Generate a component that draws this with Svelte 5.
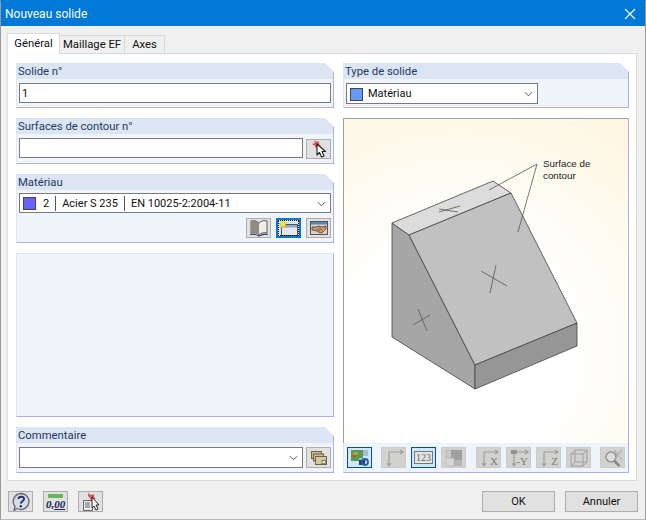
<script>
    const toolbar = [
        { icon: 'render', on: true },
        { icon: 'axes', gap: 9 },
        { icon: 'num', on: true, gap: 5 },
        { icon: 'colors', gap: 5 },
        { icon: 'x', label: 'X', gap: 10 },
        { icon: 'y', label: '-Y', gap: 5 },
        { icon: 'z', label: 'Z', gap: 5 },
        { icon: 'iso', gap: 5 },
        { icon: 'zoom', gap: 9 }
    ];
</script>

<div class="window">
    <div class="titlebar">
        <span class="title">Nouveau solide</span>
        <svg class="close" width="12" height="12" viewBox="0 0 12 12"><path d="M1 1L11 11M11 1L1 11" stroke="#fff" stroke-width="1.1" fill="none"/></svg>
    </div>

    <div class="tabs">
        <div class="tab active">Général</div>
        <div class="tab maillage">Maillage EF</div>
        <div class="tab axes">Axes</div>
    </div>

    <div class="sheet">
        <div class="col left">
            <section class="group">
                <h3>Solide n°</h3>
                <div class="body">
                    <div class="field">1</div>
                </div>
            </section>

            <section class="group">
                <h3>Surfaces de contour n°</h3>
                <div class="body row">
                    <div class="field grow"></div>
                    <button class="ico low" aria-label="Choisir">
                        <svg width="20" height="20" viewBox="0 0 20 20">
                            <path d="M5 1l3 2 2-1 0 3 2 2-3 0-2 3-1-3-3-2 3-1z" fill="#e0505a"/>
                            <path d="M8 5l0 11 2.500-2.500 2 4.500 2.500-1-2-4.500 3.500 0z" fill="#fff" stroke="#222" stroke-width="1.100" stroke-linejoin="round"/>
                        </svg>
                    </button>
                </div>
            </section>

            <section class="group">
                <h3>Matériau</h3>
                <div class="body tight">
                    <div class="field">
                        <span class="swatch mat"></span>
                        <span class="cell num">2</span>
                        <span class="cell">Acier S 235</span>
                        <span class="cell last">EN 10025-2:2004-11</span>
                        <svg class="chev" width="9" height="6" viewBox="0 0 10 6"><path d="M1 1l4 4 4-4" stroke="#444" fill="none"/></svg>
                    </div>
                    <div class="actions">
                        <button class="ico" aria-label="Bibliothèque">
                            <svg width="20" height="18" viewBox="0 0 20 18">
                                <path d="M10 4C8 2 5 1 2 2v12c3-1 6 0 8 2 2-2 5-3 8-2V2c-3-1-6 0-8 2z" fill="#efece4" stroke="#5c5c60"/>
                                <path d="M2 2v12c3-1 6 0 8 2V4C8 2 5 1 2 2z" fill="#8f8b83"/>
                                <path d="M1 15.500c3-1 6 0 9 1.500 3-1.500 6-2.500 9-1.500" stroke="#2f3c66" stroke-width="1.200" fill="none"/>
                            </svg>
                        </button>
                        <button class="ico focus" aria-label="Nouveau">
                            <svg width="21" height="17" viewBox="0 0 21 17">
                                <rect x="3.500" y="4.500" width="16" height="11" fill="#e4e8ec" stroke="#555"/>
                                <rect x="4" y="5" width="15" height="2.500" fill="#8ea6bf"/>
                                <path d="M5 0l1.300 2.700L9 3.500 6.800 5.300 7.500 8 5 6.500 2.500 8l.7-2.700L1 3.500l2.700-.8z" fill="#f7e83a" stroke="#c9b21c" stroke-width=".5"/>
                            </svg>
                        </button>
                        <button class="ico" aria-label="Modifier">
                            <svg width="20" height="16" viewBox="0 0 20 16">
                                <rect x="1.500" y="1.500" width="17" height="13" fill="#d8d3c6" stroke="#555"/>
                                <rect x="2" y="2" width="16" height="2.500" fill="#5a86b3"/>
                                <path d="M3 7h4l3-1 3 1 4-1v3l-3 3-3 1-3-2-5-1z" fill="#c89a78" stroke="#3d2c22" stroke-width=".7"/>
                                <path d="M8 9l3 2M10 8l3 2" stroke="#3d2c22" stroke-width=".6"/>
                            </svg>
                        </button>
                    </div>
                </div>
            </section>

            <section class="empty"></section>

            <section class="group">
                <h3>Commentaire</h3>
                <div class="body row">
                    <div class="field select grow">
                        <svg class="chev" width="9" height="6" viewBox="0 0 10 6"><path d="M1 1l4 4 4-4" stroke="#444" fill="none"/></svg>
                    </div>
                    <button class="ico" aria-label="Commentaires">
                        <svg width="18" height="16" viewBox="0 0 18 16">
                            <rect x="1.500" y="1.500" width="10" height="7" fill="#cdbf92" stroke="#6b6246"/>
                            <rect x="3.500" y="4" width="10" height="7" fill="#cdbf92" stroke="#6b6246"/>
                            <rect x="5.500" y="6.500" width="11" height="8" fill="#d6c99c" stroke="#6b6246"/>
                            <rect x="12" y="10.500" width="3.500" height="3" fill="#f2f2f2" stroke="#555" stroke-width=".7"/>
                        </svg>
                    </button>
                </div>
            </section>
        </div>

        <div class="col right">
            <section class="group">
                <h3>Type de solide</h3>
                <div class="body low-pad">
                    <div class="field select type">
                        <span class="swatch solid"></span>
                        <span class="type-name">Matériau</span>
                        <svg class="chev" width="9" height="6" viewBox="0 0 10 6"><path d="M1 1l4 4 4-4" stroke="#444" fill="none"/></svg>
                    </div>
                </div>
            </section>

            <section class="preview">
                <div class="canvas">
                    <svg class="drawing" width="210" height="230" viewBox="0 0 210 230">
                        <!-- left triangle face -->
                        <path d="M12 53L29 65L95 195V219L12 167Z" fill="#a6a6a6" stroke="#444" stroke-width=".8" stroke-linejoin="round"/>
                        <!-- top strip -->
                        <path d="M12 53L113 11L131 23L29 65Z" fill="#dcdcdc" stroke="#444" stroke-width=".8" stroke-linejoin="round"/>
                        <!-- slope -->
                        <path d="M29 65L131 23L197 153L95 195Z" fill="#c1c1c1" stroke="#444" stroke-width=".8" stroke-linejoin="round"/>
                        <!-- front -->
                        <path d="M95 195L197 153V176L95 219Z" fill="#969696" stroke="#444" stroke-width=".8" stroke-linejoin="round"/>
                        <path d="M101 101L127 116M116 95L110 123" stroke="#555" stroke-width=".8" fill="none"/>
                        <path d="M33 155L50 145M38 139L47 161" stroke="#555" stroke-width=".8" fill="none"/>
                        <path d="M59 42L80 36M59 39L78 42" stroke="#555" stroke-width=".8" fill="none"/>
                        <path d="M109 20L157 -6L138 62" stroke="#555" stroke-width=".8" fill="none"/>
                    </svg>
                    <div class="note">Surface de<br />contour</div>
                </div>
                <div class="toolbar">
                    {#each toolbar as t}
                        <button class="tool" class:on={t.on} style:margin-left={t.gap ? t.gap + 'px' : null} aria-label={t.icon}>
                            {#if t.icon === 'render'}
                                <svg width="20" height="18" viewBox="0 0 20 18">
                                    <rect x="1" y="1" width="12" height="11" fill="#5a9a54"/>
                                    <path d="M3 3h5v3H3z" fill="#b9a02a"/>
                                    <path d="M3 6h3v2H3z" fill="#c24a2a"/>
                                    <path d="M13 1h5v6h-5zM9 9h9v4H9z" fill="#a9bcd0"/>
                                    <path d="M9 11h6v5H9z" fill="#24406e"/>
                                    <circle cx="15" cy="13" r="3" fill="none" stroke="#2a5fa0" stroke-width="1.800"/>
                                </svg>
                            {:else if t.icon === 'axes' || t.label}
                                <svg class="dim" width="22" height="19" viewBox="0 0 22 19">
                                    <path d="M6 4h14M6 4v13M4 15l2 3 2-3M17 2l3 2-3 2" stroke="#8a8a8a" stroke-width="1.200" fill="none"/>
                                    {#if t.icon === 'y'}
                                        <path d="M3 2h6v4H3z" fill="#777"/>
                                    {/if}
                                </svg>
                                {#if t.label}<span class="axis">{t.label}</span>{/if}
                            {:else if t.icon === 'num'}
                                <span class="numbers">123</span>
                            {:else if t.icon === 'colors'}
                                <svg class="dim" width="18" height="18" viewBox="0 0 18 18">
                                    <path d="M1 1h8v8H1z" fill="#c8c8c8" stroke="#999" stroke-width=".5"/>
                                    <path d="M6 1h11v10H6z" fill="#8c8c8c"/>
                                    <path d="M9 11h8v6H9z" fill="#ababab"/>
                                    <path d="M1 9h8v8H1z" fill="#dadada" stroke="#999" stroke-width=".5"/>
                                </svg>
                            {:else if t.icon === 'iso'}
                                <svg class="dim" width="18" height="18" viewBox="0 0 18 18">
                                    <path d="M1 5l4-4h12v12l-4 4H1zM1 5h12v12M13 5l4-4M5 1v12h12M5 13l-4 4" stroke="#8a8a8a" fill="none"/>
                                </svg>
                            {:else}
                                <svg class="dim" width="20" height="18" viewBox="0 0 20 18">
                                    <path d="M11 1l8 10M19 1l-8 8" stroke="#a0a0a0" stroke-width="1.200"/>
                                    <circle cx="8" cy="8" r="5" fill="#e4e4e4" stroke="#777" stroke-width="1.500"/>
                                    <path d="M11.500 12l5 5" stroke="#666" stroke-width="2.500"/>
                                </svg>
                            {/if}
                        </button>
                    {/each}
                </div>
            </section>
        </div>
    </div>

    <div class="footer">
        <button class="ico" aria-label="Aide">
            <svg width="20" height="20" viewBox="0 0 20 20">
                <path d="M10 1.500a8 8 0 1 1-4 15l-3 2 1-4a8 8 0 0 1 6-13z" fill="#d6dbe6" stroke="#6b6b78" stroke-width="1.400"/>
                <path d="M7.500 7c0-3 6-3 5.500 0 0 2-3 2-3 4.500" stroke="#26306e" stroke-width="2" fill="none"/>
                <circle cx="9.800" cy="14.300" r="1.200" fill="#26306e"/>
            </svg>
        </button>
        <button class="ico units" aria-label="Unités">
            <span class="ruler"></span>
            <span class="zero">0,<u>00</u></span>
        </button>
        <button class="ico" aria-label="Sélection">
            <svg width="20" height="20" viewBox="0 0 20 20">
                <path d="M2.500 8.500h9v10h-9z" fill="#ececec" stroke="#666"/>
                <path d="M4 11h5M4 13h5M4 15h5" stroke="#666"/>
                <path d="M7 1l3 2 3-1 0 3 2 2-3 0-2 2-1-3-2-2z" fill="#e0505a"/>
                <path d="M11 5v11l2-2 2 4 2-1-2-4h3z" fill="#fff" stroke="#222" stroke-linejoin="round"/>
            </svg>
        </button>
        <div class="spacer"></div>
        <button class="btn">OK</button>
        <button class="btn">Annuler</button>
    </div>
</div>

<style>
    :global(body) {
        margin: 0;
        background: #f0f0f0;
    }

    .window {
        width: 646px;
        height: 520px;
        box-sizing: border-box;
        border: 1px solid #0078d7;
        border-bottom-color: #b9b9b9;
        border-left-color: #9a9a9a;
        border-right-color: #9a9a9a;
        background: #f0f0f0;
        font-family: Roboto, "Liberation Sans", sans-serif;
        font-size: 11.3px;
        color: #111;
        display: flex;
        flex-direction: column;
    }

    .titlebar {
        height: 25px;
        flex: none;
        background: #0078d7;
        color: #fff;
        display: flex;
        align-items: center;
        justify-content: space-between;
        padding: 0 9px 0 4px;
    }

    .title {
        font-size: 12px;
    }

    .tabs {
        display: flex;
        align-items: flex-end;
        height: 27px;
        flex: none;
        padding-left: 6px;
    }

    .tab {
        height: 18px;
        box-sizing: border-box;
        line-height: 18px;
        text-align: center;
        border: 1px solid #d9d9d9;
        border-bottom: none;
        margin-left: -1px;
        background: #f0f0f0;
    }

    .tab.active {
        width: 53px;
        height: 21px;
        line-height: 20px;
        margin-left: 0;
        background: #fff;
        position: relative;
        z-index: 1;
        margin-bottom: -1px;
    }

    .tab.maillage {
        width: 66px;
    }

    .tab.axes {
        width: 41px;
    }

    .sheet {
        width: 630px;
        height: 428px;
        box-sizing: border-box;
        margin-left: 6px;
        background: #fff;
        border: 1px solid #d9d9d9;
        padding: 9px 7px 7px 8px;
        display: grid;
        grid-template-columns: 318px 286px;
        column-gap: 9px;
        flex: none;
    }

    .col {
        display: flex;
        flex-direction: column;
        gap: 10px;
        min-height: 0;
    }

    .group h3 {
        margin: 0;
        height: 16px;
        box-sizing: border-box;
        line-height: 17px;
        padding-left: 2px;
        font-size: 11.300px;
        font-weight: 400;
        color: #1f3864;
        background: #dbe5f4;
        border-right: 1px solid #aeaeee;
        clip-path: polygon(0 0, calc(100% - 9px) 0, 100% 9px, 100% 100%, 0 100%);
    }

    .body {
        padding: 4px 2px 4px 2px;
        background: #f0f5fb;
        border-left: 1px solid #dfe7f7;
        border-right: 1px solid #aeaeee;
        border-bottom: 1px solid #aeaeee;
    }

    .body.tight {
        padding-top: 3px;
    }

    .body.low-pad {
        padding-bottom: 3px;
    }

    .row {
        display: flex;
        gap: 3px;
        align-items: flex-start;
    }

    .field {
        height: 20px;
        box-sizing: border-box;
        border: 1px solid #7a7a7a;
        background: #fff;
        line-height: 18px;
        padding: 1px 0 0 2px;
        font-size: 11px;
        display: flex;
        align-items: center;
        position: relative;
    }

    .grow {
        flex: 1;
    }

    .select {
        height: 21px;
    }

    .chev {
        position: absolute;
        right: 4px;
        top: 7px;
    }

    .swatch {
        width: 13px;
        height: 13px;
        box-sizing: border-box;
        border: 1px solid #444;
        margin-left: 1px;
        flex: none;
    }

    .mat {
        background: #6666ff;
    }

    .solid {
        background: #6699ff;
    }

    .cell {
        padding: 0 6px;
        border-right: 1px solid #555;
        height: 15px;
        line-height: 15px;
    }

    .cell.num {
        padding: 0 6px 0 7px;
    }

    .cell.last {
        border-right: none;
    }

    .type {
        width: 192px;
    }

    .type-name {
        padding-left: 5px;
    }

    .actions {
        display: flex;
        justify-content: flex-end;
        gap: 5px;
        margin-top: 5px;
    }

    .actions .ico {
        height: 20px;
    }

    button {
        font: inherit;
        color: inherit;
        padding: 0;
        margin: 0;
    }

    .ico {
        width: 25px;
        height: 21px;
        flex: none;
        box-sizing: border-box;
        background: #e1e1e1;
        border: 1px solid #adadad;
        display: flex;
        align-items: center;
        justify-content: center;
        overflow: hidden;
    }

    .ico.low {
        height: 20px;
        margin-top: 1px;
    }

    .ico.focus {
        border: 2px solid #0078d7;
        outline: 1px dotted #111;
        outline-offset: -3px;
    }

    .empty {
        flex: 1;
        min-height: 0;
        box-sizing: border-box;
        background: #f0f5fb;
        border-top: 1px solid #dfe7f7;
        border-left: 1px solid #dfe7f7;
        border-right: 1px solid #aeaeee;
        border-bottom: 1px solid #aeaeee;
    }

    .preview {
        flex: 1;
        min-height: 0;
        display: flex;
        flex-direction: column;
        box-sizing: border-box;
        border-left: 1px solid #dfe7f7;
        border-right: 1px solid #aeaeee;
        border-bottom: 1px solid #aeaeee;
    }

    .canvas {
        flex: 1;
        position: relative;
        margin-left: -1px;
        background: radial-gradient(circle at 40% 72%, #ffffff 38%, #fdf5dc 105%);
        border-top: 1px solid #a0a0a0;
        border-left: 1px solid #a0a0a0;
    }

    .drawing {
        position: absolute;
        left: 36px;
        top: 51px;
        overflow: visible;
    }

    .note {
        position: absolute;
        left: 199px;
        top: 39px;
        font-family: "Liberation Sans", sans-serif;
        font-size: 9.800px;
        line-height: 12px;
        color: #222;
    }

    .toolbar {
        height: 29px;
        flex: none;
        box-sizing: border-box;
        background: #eef4fb;
        display: flex;
        align-items: flex-start;
        padding: 4px 0 0 3px;
    }

    .tool {
        width: 25px;
        height: 21px;
        box-sizing: border-box;
        background: #d2d2d0;
        border: 1px solid #cbcbc9;
        display: flex;
        align-items: center;
        justify-content: center;
        position: relative;
        overflow: hidden;
        flex: none;
    }

    .tool.on {
        background: #cfe6fb;
        border-color: #0b4f8a;
    }

    .dim {
        opacity: .7;
    }

    .axis {
        position: absolute;
        right: 2px;
        bottom: 0;
        font-family: "Liberation Serif", serif;
        font-size: 11px;
        line-height: 12px;
        color: #7a7a7a;
    }

    .numbers {
        background: #e4e4e2;
        border: 1px solid #777;
        font-family: "Liberation Serif", serif;
        font-size: 10px;
        line-height: 11px;
        padding: 0 1px;
        color: #666;
    }

    .footer {
        display: flex;
        align-items: flex-start;
        gap: 10px;
        padding: 10px 7px 0 7px;
    }

    .spacer {
        flex: 1;
    }

    .units {
        flex-direction: column;
        justify-content: flex-start;
        padding-top: 2px;
    }

    .ruler {
        display: block;
        width: 15px;
        height: 4px;
        background: #6cb45a;
    }

    .zero {
        font-family: "Liberation Serif", serif;
        font-style: italic;
        font-weight: 700;
        font-size: 11px;
        line-height: 12px;
        color: #20205a;
    }

    .btn {
        width: 73px;
        height: 21px;
        box-sizing: border-box;
        background: #e1e1e1;
        border: 1px solid #adadad;
        font-size: 11px;
        line-height: 19px;
    }
</style>
